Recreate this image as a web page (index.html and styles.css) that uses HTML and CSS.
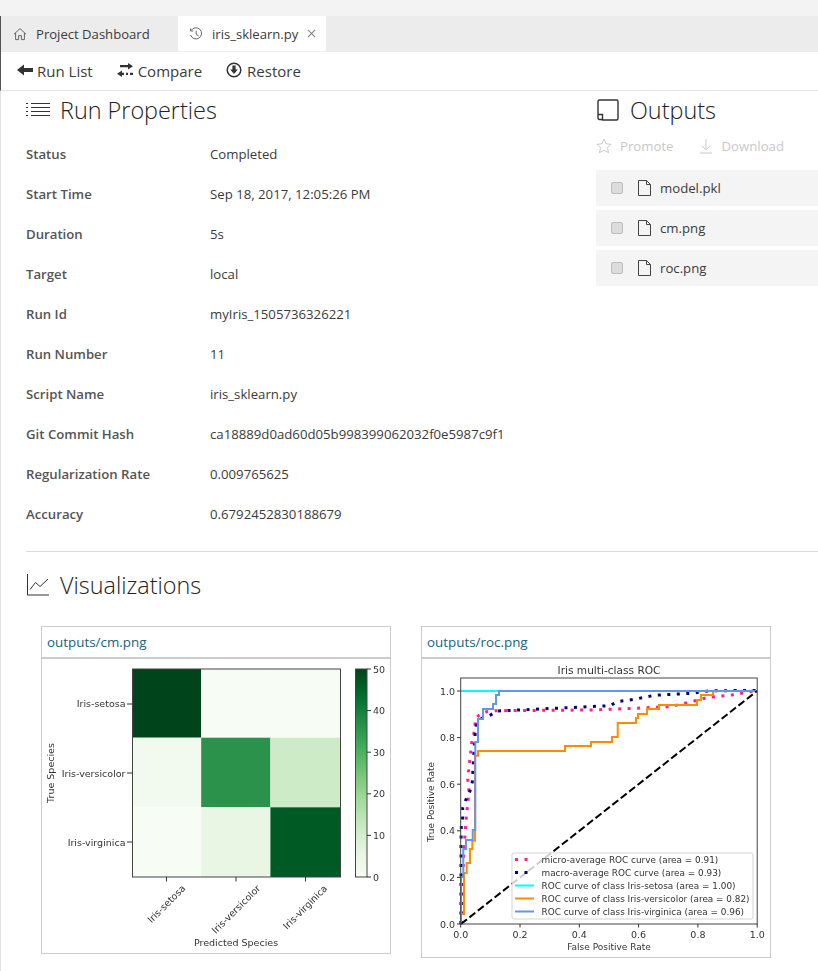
FILE: index.html
```html
<!DOCTYPE html>
<html lang="en">
<head>
    <meta charset="UTF-8">
    <meta name="viewport" content="width=device-width, initial-scale=1.0">
    <title>iris_sklearn.py</title>
    <link rel="stylesheet" href="styles.css">
</head>
<body>
    <div class="top-strip"></div>
    <div class="tabs">
        <div class="tab">
            <svg class="tab-icon" viewBox="0 0 14 14"><path d="M1 7.200 7 1.600l6 5.600M2.600 6v6.600h3V8.600h2.800v4h3V6"/></svg>
            <span>Project Dashboard</span>
        </div>
        <div class="tab active">
            <svg class="tab-icon" viewBox="0 0 14 14"><path d="M2.200 3.400A5.600 5.600 0 1 1 1.600 8M1.600 1.400v2.600h2.600M7.200 3.800v3.600l2.400 1.400"/></svg>
            <span>iris_sklearn.py</span>
            <svg class="tab-close" viewBox="0 0 10 10"><path d="M1 1l8 8M9 1 1 9"/></svg>
        </div>
    </div>
    <div class="toolbar">
        <div class="tool run-list">
            <svg class="tool-icon" viewBox="0 0 16 14"><path class="solid" d="M0 7l7-5.600v3.700h9v3.800H7v3.700z"/></svg>
            <span>Run List</span>
        </div>
        <div class="tool">
            <svg class="tool-icon" viewBox="0 0 16 14"><path class="solid" d="M11 0l5 3.200-5 3.200V4.300H3V2.100h8zM5 7.600v2.100h2v2.200H5V14L0 10.800zM9 9.700h2v2.200H9zM13 9.700h3v2.200h-3z"/></svg>
            <span>Compare</span>
        </div>
        <div class="tool">
            <svg class="tool-icon round" viewBox="0 0 16 16"><circle cx="8" cy="8" r="6.800"/><path class="solid" d="M6.400 3.600h3.200v4h2.200L8 12 4.200 7.600h2.200z"/></svg>
            <span>Restore</span>
        </div>
    </div>

    <div class="main">
        <div class="columns">
            <section class="props">
                <h2 class="heading">
                    <svg class="head-icon" viewBox="0 0 24 18"><path d="M5 2.500h19M5 6.500h19M5 10.500h19M5 14.500h19M0 2.500h2M0 6.500h2M0 10.500h2M0 14.500h2"/></svg>
                    Run Properties
                </h2>
                <div class="row"><span class="label">Status</span><span>Completed</span></div>
                <div class="row"><span class="label">Start Time</span><span>Sep 18, 2017, 12:05:26 PM</span></div>
                <div class="row"><span class="label">Duration</span><span>5s</span></div>
                <div class="row"><span class="label">Target</span><span>local</span></div>
                <div class="row"><span class="label">Run Id</span><span>myIris_1505736326221</span></div>
                <div class="row"><span class="label">Run Number</span><span>11</span></div>
                <div class="row"><span class="label">Script Name</span><span>iris_sklearn.py</span></div>
                <div class="row"><span class="label">Git Commit Hash</span><span>ca18889d0ad60d05b998399062032f0e5987c9f1</span></div>
                <div class="row"><span class="label">Regularization Rate</span><span>0.009765625</span></div>
                <div class="row"><span class="label">Accuracy</span><span>0.6792452830188679</span></div>
            </section>
            <section class="outputs">
                <h2 class="heading">
                    <svg class="head-icon page-icon" viewBox="0 0 22 22"><path d="M5.500 20.500H2.500q-1.500 0-1.500-1.500V2.500Q1 1 2.500 1h17Q21 1 21 2.500v17q0 1.500-1.500 1.500H5.500zM1 15.500h4.500V21"/></svg>
                    Outputs
                </h2>
                <div class="actions">
                    <span class="action">
                        <svg class="action-icon" viewBox="0 0 16 16"><path d="M8 1l2.100 4.800 5.200.5-3.900 3.400 1.200 5.100L8 12.100l-4.600 2.700 1.200-5.100L.7 6.300l5.200-.5z"/></svg>
                        Promote
                    </span>
                    <span class="action">
                        <svg class="action-icon" viewBox="0 0 16 16"><path d="M8 1v10.500M3.800 7.600 8 11.800l4.200-4.200M2 15h12"/></svg>
                        Download
                    </span>
                </div>
                <div class="file"><span class="check"></span><svg class="file-icon" viewBox="0 0 13 16"><path d="M.5.500h8l4 4v11H.5zM8.500.500v4h4"/></svg>model.pkl</div>
                <div class="file"><span class="check"></span><svg class="file-icon" viewBox="0 0 13 16"><path d="M.5.500h8l4 4v11H.5zM8.500.500v4h4"/></svg>cm.png</div>
                <div class="file"><span class="check"></span><svg class="file-icon" viewBox="0 0 13 16"><path d="M.5.500h8l4 4v11H.5zM8.500.500v4h4"/></svg>roc.png</div>
            </section>
        </div>

        <hr class="divider">

        <h2 class="heading">
            <svg class="head-icon" viewBox="0 0 22 22"><path d="M.5 0v21H22M3 15.500l5.500-7 4.500 4L21 5"/></svg>
            Visualizations
        </h2>

        <div class="cards">
            <div class="card">
                <div class="card-title">outputs/cm.png</div>
                <!-- viewBox uses the position of the plot in the window -->
                <svg class="plot plot-cm" viewBox="42 659 348 294">
                    <defs>
                        <linearGradient id="greens" x1="0" y1="1" x2="0" y2="0">
                            <stop offset="0" stop-color="#f7fcf5"/>
                            <stop offset=".125" stop-color="#e5f5e0"/>
                            <stop offset=".25" stop-color="#c7e9c0"/>
                            <stop offset=".375" stop-color="#a1d99b"/>
                            <stop offset=".5" stop-color="#74c476"/>
                            <stop offset=".625" stop-color="#41ab5d"/>
                            <stop offset=".75" stop-color="#238b45"/>
                            <stop offset=".875" stop-color="#006d2c"/>
                            <stop offset="1" stop-color="#00441b"/>
                        </linearGradient>
                    </defs>
                    <rect x="132.500" y="669" width="68.700" height="68.700" fill="#00441b"/>
                    <rect x="201.200" y="669" width="69.200" height="68.700" fill="#f7fcf5"/>
                    <rect x="270.400" y="669" width="70" height="68.700" fill="#f7fcf5"/>
                    <rect x="132.500" y="737.700" width="68.700" height="69.600" fill="#f2f9ef"/>
                    <rect x="201.200" y="737.700" width="69.200" height="69.600" fill="#2a924a"/>
                    <rect x="270.400" y="737.700" width="70" height="69.600" fill="#ccebc6"/>
                    <rect x="132.500" y="807.300" width="68.700" height="69.700" fill="#f7fcf5"/>
                    <rect x="201.200" y="807.300" width="69.200" height="69.700" fill="#e9f6e4"/>
                    <rect x="270.400" y="807.300" width="70" height="69.700" fill="#005a24"/>
                    <rect class="spine" x="132.500" y="669" width="208" height="208"/>
                    <rect x="355.500" y="669" width="11.500" height="208" fill="url(#greens)" stroke="#444"/>
                    <path class="tick" d="M127 704h5.500M127 773h5.500M127 842h5.500M166.500 877v4.500M236 877v4.500M305.500 877v4.500M367 669h4M367 710.600h4M367 752.200h4M367 793.800h4M367 835.400h4M367 877h4"/>
                    <text class="end" x="125.500" y="707">Iris-setosa</text>
                    <text class="end" x="125.500" y="776.500">Iris-versicolor</text>
                    <text class="end" x="125.500" y="846">Iris-virginica</text>
                    <text x="373" y="672.500">50</text>
                    <text x="373" y="714">40</text>
                    <text x="373" y="755.500">30</text>
                    <text x="373" y="797">20</text>
                    <text x="373" y="839">10</text>
                    <text x="373" y="880.500">0</text>
                    <text class="end" transform="translate(186 889) rotate(-45)">Iris-setosa</text>
                    <text class="end" transform="translate(261 889) rotate(-45)">Iris-versicolor</text>
                    <text class="end" transform="translate(328 889) rotate(-45)">Iris-virginica</text>
                    <text class="mid" x="236" y="946">Predicted Species</text>
                    <text class="mid" transform="translate(54 773) rotate(-90)">True Species</text>
                </svg>
            </div>
            <div class="card">
                <div class="card-title">outputs/roc.png</div>
                <svg class="plot plot-roc" viewBox="422 659 348 298">
                    <text class="mid title" x="609" y="674">Iris multi-class ROC</text>
                    <rect class="spine-bg" x="460.700" y="678" width="296.500" height="246"/>
                    <polyline class="curve dots pink" points="461,924 461.700,903 462.700,877 464,850 465,834 466.300,817 468.300,798 469,788 467.700,779 469.700,761 471.700,743 475,728.300 475,719 480,714.300 486.700,711.700 495,710.700 590,710 633.300,708.300 670,706.700 698.300,700 706.700,697.700 731.700,695 757,690.500"/>
                    <polyline class="curve dots navy" points="461,924 461,840 461.300,827 462.700,817 462.700,808 465.700,800 470,791 472.300,782 473.300,763 475,735.700 476,726 480,719 489.300,715.700 497.300,711 610,705.700 617.300,701.700 636,699 654.300,695.300 691.700,693.300 710,690.700 757,690.500"/>
                    <polyline class="curve cyan" points="461,691 757,691"/>
                    <polyline class="curve orange" points="461,924 461,914 464,914 464,873 466.700,873 466.700,863 470,863 470,849 472.300,849 472.300,840.700 475,840.700 475,755.700 478,755.700 478,751 565,751 565,746 591,746 591,742 612,742 612,737 617.700,737 617.700,723 636,723 636,718 638,718 638,714 647,714 647,709 659,709 659,705 697,705 697,700 701,700 701,695 713,695 713,691 757,691"/>
                    <polyline class="curve blue" points="461,924 461,877 463.300,877 463.300,849 466,849 466,840 472.700,840 472.700,830 475.300,830 475.300,742 478,742 478,719 483,719 483,709 493,709 493,704 496,704 496,695 499,695 499,691 757,691"/>
                    <line class="chance" x1="461" y1="924" x2="757" y2="691"/>
                    <rect class="spine" x="460.700" y="678" width="296.500" height="246"/>
                    <rect class="legend" x="512" y="853" width="241" height="66" rx="2"/>
                    <path class="curve dots pink" d="M515 859.500h19"/>
                    <path class="curve dots navy" d="M515 872.500h19"/>
                    <path class="curve cyan" d="M515 885.500h19"/>
                    <path class="curve orange" d="M515 898.500h19"/>
                    <path class="curve blue" d="M515 911.500h19"/>
                    <text class="small" x="541.500" y="862.500">micro-average ROC curve (area = 0.91)</text>
                    <text class="small" x="541.500" y="876">macro-average ROC curve (area = 0.93)</text>
                    <text class="small" x="541.500" y="889">ROC curve of class Iris-setosa (area = 1.00)</text>
                    <text class="small" x="541.500" y="902">ROC curve of class Iris-versicolor (area = 0.82)</text>
                    <text class="small" x="541.500" y="915">ROC curve of class Iris-virginica (area = 0.96)</text>
                    <path class="tick" d="M457 691h3.700M457 737.600h3.700M457 784.200h3.700M457 830.800h3.700M457 877.400h3.700M457 924h3.700M460.700 924v3.500M520 924v3.500M579.300 924v3.500M638.600 924v3.500M697.900 924v3.500M757.200 924v3.500"/>
                    <text class="end" x="455" y="694.500">1.0</text>
                    <text class="end" x="455" y="741">0.8</text>
                    <text class="end" x="455" y="787.700">0.6</text>
                    <text class="end" x="455" y="834.300">0.4</text>
                    <text class="end" x="455" y="881">0.2</text>
                    <text class="end" x="455" y="927.500">0.0</text>
                    <text class="mid" x="460.700" y="937.500">0.0</text>
                    <text class="mid" x="520" y="937.500">0.2</text>
                    <text class="mid" x="579.300" y="937.500">0.4</text>
                    <text class="mid" x="638.600" y="937.500">0.6</text>
                    <text class="mid" x="697.900" y="937.500">0.8</text>
                    <text class="mid" x="757.200" y="937.500">1.0</text>
                    <text class="mid axis-name" x="609" y="950">False Positive Rate</text>
                    <text class="mid axis-name" transform="translate(434 802) rotate(-90)">True Positive Rate</text>
                </svg>
            </div>
        </div>
    </div>
</body>
</html>
```

FILE: styles.css
```css
html, body {
    margin: 0;
    height: 971px;
    overflow: hidden;
}
body {
    background-color: white;
    color: #3b3b3b;
    font-family: "Open Sans", "Liberation Sans", sans-serif;
    font-size: 13.2px;
}
.top-strip {
    height: 16px;
    background-color: #f3f3f3;
}
.tabs {
    display: flex;
    height: 36px;
    background-color: #ececec;
    border-left: 1px solid #555;
    box-sizing: border-box;
}
.tab {
    display: flex;
    align-items: center;
    width: 177px;
    padding-left: 12px;
    box-sizing: border-box;
    font-size: 13.1px;
}
.tab.active {
    width: 148px;
    padding-left: 11px;
    background-color: white;
    margin-bottom: 1px;
}
.tab-icon {
    width: 14px;
    height: 14px;
    margin-right: 9px;
    fill: none;
    stroke: #666;
    stroke-width: 1;
}
.tab-close {
    width: 9px;
    height: 9px;
    margin-left: 9px;
    fill: none;
    stroke: #888;
    stroke-width: 1.3;
}
.toolbar {
    display: flex;
    align-items: center;
    height: 39px;
    padding-left: 16px;
    gap: 24px;
    border-left: 1px solid #555;
    border-bottom: 1px solid #e6e6e6;
    box-sizing: border-box;
    font-size: 15px;
}
.tool {
    display: flex;
    align-items: center;
    gap: 5px;
}
.run-list {
    gap: 4px;
}
.tool-icon {
    width: 16px;
    height: 14px;
    margin-top: -3px;
}
.tool-icon.round {
    height: 16px;
    fill: none;
    stroke: #333;
    stroke-width: 1.5;
}
.tool-icon .solid {
    fill: #333;
    stroke: none;
}
.main {
    height: 880px;
    padding-left: 25px;
    border-left: 1px solid #e2e2e2;
    box-sizing: border-box;
}
.columns {
    display: flex;
}
.props {
    width: 570px;
}
.outputs {
    flex: 1;
}
.heading {
    display: flex;
    align-items: center;
    gap: 10px;
    height: 40px;
    margin: 0;
    padding-bottom: 2px;
    box-sizing: border-box;
    font-size: 23.4px;
    font-weight: 300;
    color: #222;
}
.head-icon {
    width: 24px;
    height: 22px;
    fill: none;
    stroke: #333;
    stroke-width: 1;
}
.props .heading {
    margin-bottom: 3px;
}
.page-icon {
    stroke-width: 1.4;
}
.row {
    display: flex;
    align-items: center;
    height: 40px;
}
.label {
    width: 184px;
    font-weight: 600;
    color: #555;
}
.actions {
    display: flex;
    align-items: center;
    gap: 24px;
    height: 30px;
    margin-bottom: 9px;
    color: #c8c8c8;
}
.action {
    display: flex;
    align-items: center;
    gap: 8px;
}
.action-icon {
    width: 16px;
    height: 16px;
    fill: none;
    stroke: #c8c8c8;
    stroke-width: 1;
}
.file {
    display: flex;
    align-items: center;
    height: 36px;
    margin-bottom: 4px;
    padding-left: 15px;
    background-color: #f4f4f4;
}
.check {
    width: 10px;
    height: 10px;
    margin-right: 15px;
    background-color: #dcdcdc;
    border: 1px solid #bcbcbc;
    border-radius: 2px;
}
.file-icon {
    width: 13px;
    height: 16px;
    margin-right: 9px;
    fill: none;
    stroke: #444;
    stroke-width: 1;
}
.divider {
    height: 1px;
    margin: 17px 0 14px;
    border: none;
    background-color: #ddd;
}
.cards {
    display: flex;
    align-items: flex-start;
    gap: 30px;
    margin: 20px 0 0 15px;
}
.card {
    width: 350px;
    border: 1px solid #ccc;
    box-sizing: border-box;
}
.card-title {
    height: 30px;
    line-height: 30px;
    padding-left: 5px;
    border-bottom: 2px solid #ccc;
    color: #17647f;
    font-size: 13.4px;
}
.plot {
    display: block;
    width: 348px;
    filter: blur(0.3px);
}
.plot-cm {
    height: 294px;
}
.plot-roc {
    height: 298px;
}
.plot text {
    fill: #333;
    font-family: "DejaVu Sans", sans-serif;
    font-size: 9.5px;
}
.plot text.small {
    font-size: 8.9px;
}
.plot text.title {
    font-size: 10.6px;
}
.plot text.axis-name {
    font-size: 9px;
}
.plot text.end {
    text-anchor: end;
}
.plot text.mid {
    text-anchor: middle;
}
.spine {
    fill: none;
    stroke: #444;
    stroke-width: 1;
}
.spine-bg {
    fill: white;
}
.tick {
    fill: none;
    stroke: #333;
    stroke-width: 1;
}
.curve {
    fill: none;
    stroke-width: 2;
}
.curve.dots {
    stroke-width: 3;
    stroke-dasharray: 3 6.5;
}
.pink {
    stroke: #ff1f92;
}
.navy {
    stroke: #000080;
}
.cyan {
    stroke: #00ffff;
}
.orange {
    stroke: #ff8c00;
}
.blue {
    stroke: #6495ed;
}
.chance {
    stroke: black;
    stroke-width: 2;
    stroke-dasharray: 7.5 3.2;
}
.legend {
    fill: white;
    fill-opacity: 0.8;
    stroke: #d5d5d5;
    stroke-width: 1;
}
```
